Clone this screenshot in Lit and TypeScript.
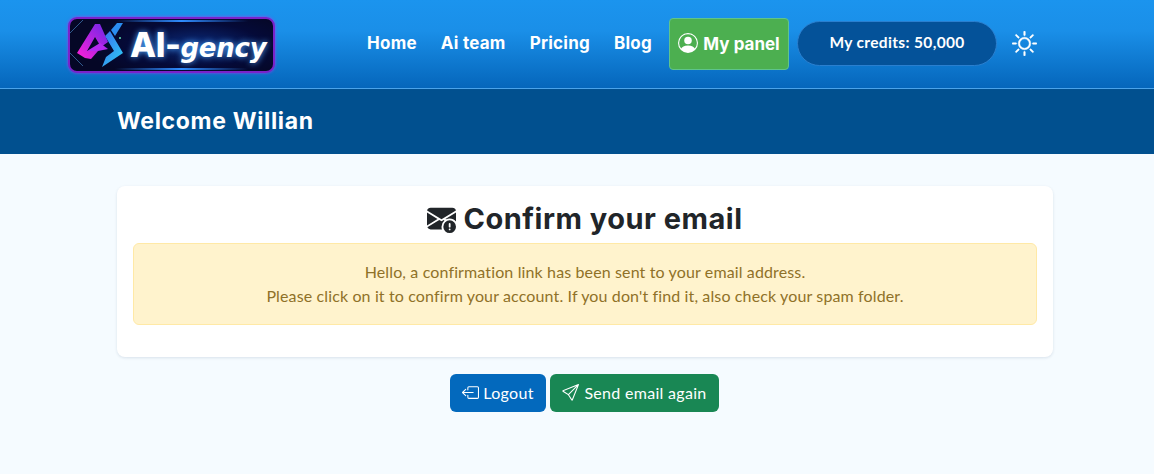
import { LitElement, html, css } from "lit";
import { customElement } from "lit/decorators.js";

@customElement("app-root")
export class AppRoot extends LitElement {
  static styles = css`
    :host { display: block; height: 474px; background: #f5fbff; font-family: "Lato", "Noto Sans", sans-serif; overflow: hidden; }
    .top { height: 88px; box-sizing: content-box; border-bottom: 1px solid #4ba3ea; background: linear-gradient(180deg, #1b94ee 0%, #1a8fe8 35%, #0566bb 100%); display: flex; align-items: center; padding-left: 68px; }
    .logo { width: 207px; height: 56px; box-sizing: border-box; margin-top: 2px; border: 2px solid #7b22c9; border-radius: 9px; background: radial-gradient(ellipse 55% 70% at 62% 50%, #0b2a78 0%, #050a38 60%, #050726 100%); box-shadow: 0 0 3px #a03cf0; position: relative; display: flex; align-items: center; overflow: hidden; flex: none; }
    .logo::before, .logo::after { content: ""; position: absolute; left: 45px; right: 25px; height: 2px; background: linear-gradient(90deg, transparent, #2f8cff 50%, transparent); }
    .logo::before { top: 1px; }
    .logo::after { bottom: 1px; }
    .mark { width: 50px; height: 50px; margin-left: 5px; flex: none; overflow: visible; }
    .ltext { margin-left: 5px; color: #fff; font: 800 34px/1 "Inter", sans-serif; letter-spacing: -0.5px; text-shadow: 0 0 6px #4fa8ff; white-space: nowrap; display: flex; align-items: baseline; }
    .ltext i { font: italic 700 26px/1 "DejaVu Sans", sans-serif; letter-spacing: -0.2px; margin-left: 0; }
    nav { display: flex; align-items: center; margin-left: 92px; margin-top: -2px; }
    nav a { color: #fff; font: 700 17px/1 "Inter", sans-serif; margin-right: 24px; letter-spacing: 0.25px; white-space: nowrap; }
    .panel { width: 120px; height: 52px; box-sizing: border-box; margin: 2px 8px 0 -7px; background: #4caf50; border: 1px solid #5fc48c; border-radius: 4px; display: flex; align-items: center; justify-content: center; gap: 5px; color: #fff; font: 700 17px/1 "Inter", sans-serif; white-space: nowrap; }
    .panel svg { width: 20px; height: 20px; flex: none; margin-top: -3px; }
    .credits { width: 200px; height: 45px; box-sizing: border-box; border: 1px solid #2a7fcf; border-radius: 23px; background: #045299; color: #fff; font: 700 15.5px/1 "Lato", sans-serif; display: flex; align-items: center; justify-content: center; letter-spacing: 0.35px; }
    .sun { width: 25px; height: 25px; margin-left: 15px; flex: none; stroke: #fff; stroke-width: 0.3; }
    .band { height: 65px; box-sizing: border-box; padding-left: 117px; background: #01508f; display: flex; align-items: center; color: #fff; font: 700 23px/1 "Inter", sans-serif; letter-spacing: 0.65px; }
    .wrap { display: flex; flex-direction: column; align-items: center; padding: 32px 0 0 16px; }
    .card { width: 936px; height: 171px; box-sizing: border-box; background: #fff; border-radius: 8px; box-shadow: 0 1px 3px rgba(20,50,90,.12); padding: 16px; }
    h1 { margin: 0; height: 41px; box-sizing: border-box; padding-bottom: 8px; display: flex; align-items: center; justify-content: center; gap: 7px; font: 700 29px/1 "Inter", sans-serif; color: #212529; letter-spacing: 0.5px; }
    h1 svg { width: 29px; height: 29px; flex: none; }
    .alert { height: 82px; box-sizing: border-box; background: #fff3cd; border: 1px solid #ffe9a6; border-radius: 6px; color: #8f7128; font: 400 16px/24px "Lato", sans-serif; letter-spacing: 0.13px; text-align: center; padding-top: 16px; }
    .btns { display: flex; gap: 4px; margin: 17px 1px 0 0; }
    .btn { height: 38px; box-sizing: border-box; padding-bottom: 1px; border-radius: 6px; display: flex; align-items: center; justify-content: center; gap: 4px; color: #fff; font: 400 16px/1 "Lato", sans-serif; letter-spacing: 0.3px; }
    .btn svg { width: 17px; height: 17px; flex: none; }
    .blue { width: 96px; background: #0369bd; }
    .green { width: 169px; background: #198754; gap: 5px; }
  `;
  render() {
    return html`
      <header class="top">
        <div class="logo">
          <svg class="mark" viewBox="0 0 50 50">
            <defs>
              <linearGradient id="lg1" x1="0" y1="1" x2="1" y2="0"><stop offset="0" stop-color="#ff20d8"/><stop offset="1" stop-color="#6a28e8"/></linearGradient>
              <linearGradient id="lg2" x1="0" y1="0" x2="1" y2="1"><stop offset="0" stop-color="#3b6df0"/><stop offset="1" stop-color="#2cd0f4"/></linearGradient>
            </defs>
            <path d="M-5 13 L8 0 M-5 33 L8 46" stroke="#3a6fa8" stroke-width=".8" fill="none"/>
            <path d="M20 4 L25 4 L33 22 L26 27 L20 17 L12 31 L23 31 L16 39 L10 38 L2 33 Z" fill="url(#lg1)"/>
            <path d="M12 31 L25 23 L33 29 L23 31 Z" fill="#b52af0"/>
            <path d="M30 16 L35 11 L48 33 L27 47 L31 37 L39 31 Z" fill="url(#lg2)"/>
            <path d="M42 3 L48 3 L40 16 L36 10 Z" fill="#2a8cf0"/>
            <circle cx="45" cy="18" r="1" fill="#5fe0b0"/>
          </svg>
          <span class="ltext">AI-<i>gency</i></span>
        </div>
        <nav>
          <a>Home</a><a>Ai team</a><a>Pricing</a><a>Blog</a>
          <div class="panel">
            <svg viewBox="0 0 16 16" fill="#fff"><path d="M11 6a3 3 0 1 1-6 0 3 3 0 0 1 6 0"/><path fill-rule="evenodd" d="M0 8a8 8 0 1 1 16 0A8 8 0 0 1 0 8m8-7a7 7 0 0 0-5.468 11.37C3.242 11.226 4.805 10 8 10s4.757 1.225 5.468 2.37A7 7 0 0 0 8 1"/></svg>
            My panel
          </div>
          <div class="credits">My credits: 50,000</div>
          <svg class="sun" viewBox="0 0 16 16" fill="#fff"><path d="M8 11a3 3 0 1 1 0-6 3 3 0 0 1 0 6m0 1a4 4 0 1 0 0-8 4 4 0 0 0 0 8M8 0a.5.5 0 0 1 .5.5v2a.5.5 0 0 1-1 0v-2A.5.5 0 0 1 8 0m0 13a.5.5 0 0 1 .5.5v2a.5.5 0 0 1-1 0v-2A.5.5 0 0 1 8 13m8-5a.5.5 0 0 1-.5.5h-2a.5.5 0 0 1 0-1h2a.5.5 0 0 1 .5.5M3 8a.5.5 0 0 1-.5.5h-2a.5.5 0 0 1 0-1h2A.5.5 0 0 1 3 8m10.657-5.657a.5.5 0 0 1 0 .707l-1.414 1.415a.5.5 0 1 1-.707-.708l1.414-1.414a.5.5 0 0 1 .707 0m-9.193 9.193a.5.5 0 0 1 0 .707L3.05 13.657a.5.5 0 0 1-.707-.707l1.414-1.414a.5.5 0 0 1 .707 0m9.193 2.121a.5.5 0 0 1-.707 0l-1.414-1.414a.5.5 0 0 1 .707-.707l1.414 1.414a.5.5 0 0 1 0 .707M4.464 4.465a.5.5 0 0 1-.707 0L2.343 3.05a.5.5 0 1 1 .707-.707l1.414 1.414a.5.5 0 0 1 0 .708"/></svg>
        </nav>
      </header>
      <div class="band">Welcome Willian</div>
      <main class="wrap">
        <section class="card">
          <h1>
            <svg viewBox="0 0 16 16" fill="#212529"><path d="M.05 3.555A2 2 0 0 1 2 2h12a2 2 0 0 1 1.95 1.555L8 8.414zM0 4.697v7.104l5.803-3.558zM6.761 8.83l-6.57 4.026A2 2 0 0 0 2 14h6.256A4.5 4.5 0 0 1 8 12.5a4.49 4.49 0 0 1 1.606-3.446l-.367-.225L8 9.586zM16 4.697v4.974A4.5 4.5 0 0 0 12.5 8a4.5 4.5 0 0 0-1.965.45l-.338-.207z"/><path d="M12.5 16a3.5 3.5 0 1 0 0-7 3.5 3.5 0 0 0 0 7m.5-5v1.5a.5.5 0 0 1-1 0V11a.5.5 0 0 1 1 0m0 3a.5.5 0 1 1-1 0 .5.5 0 0 1 1 0"/></svg>
            Confirm your email
          </h1>
          <div class="alert">Hello, a confirmation link has been sent to your email address.<br>Please click on it to confirm your account. If you don't find it, also check your spam folder.</div>
        </section>
        <div class="btns">
          <div class="btn blue">
            <svg viewBox="0 0 16 16" fill="#fff"><path fill-rule="evenodd" d="M6 12.5a.5.5 0 0 0 .5.5h8a.5.5 0 0 0 .5-.5v-9a.5.5 0 0 0-.5-.5h-8a.5.5 0 0 0-.5.5v2a.5.5 0 0 1-1 0v-2A1.5 1.5 0 0 1 6.5 2h8A1.5 1.5 0 0 1 16 3.5v9a1.5 1.5 0 0 1-1.5 1.5h-8A1.5 1.5 0 0 1 5 12.5v-2a.5.5 0 0 1 1 0z"/><path fill-rule="evenodd" d="M.146 8.354a.5.5 0 0 1 0-.708l3-3a.5.5 0 1 1 .708.708L1.707 7.5H10.5a.5.5 0 0 1 0 1H1.707l2.147 2.146a.5.5 0 0 1-.708.708z"/></svg>
            Logout
          </div>
          <div class="btn green">
            <svg viewBox="0 0 16 16" fill="#fff"><path d="M15.854.146a.5.5 0 0 1 .11.54l-5.819 14.547a.75.75 0 0 1-1.329.124l-3.178-4.995L.643 7.184a.75.75 0 0 1 .124-1.33L15.314.037a.5.5 0 0 1 .54.11ZM6.636 10.07l2.761 4.338L14.13 2.576zm6.787-8.201L1.591 6.602l4.339 2.76z"/></svg>
            Send email again
          </div>
        </div>
      </main>
    `;
  }
}
